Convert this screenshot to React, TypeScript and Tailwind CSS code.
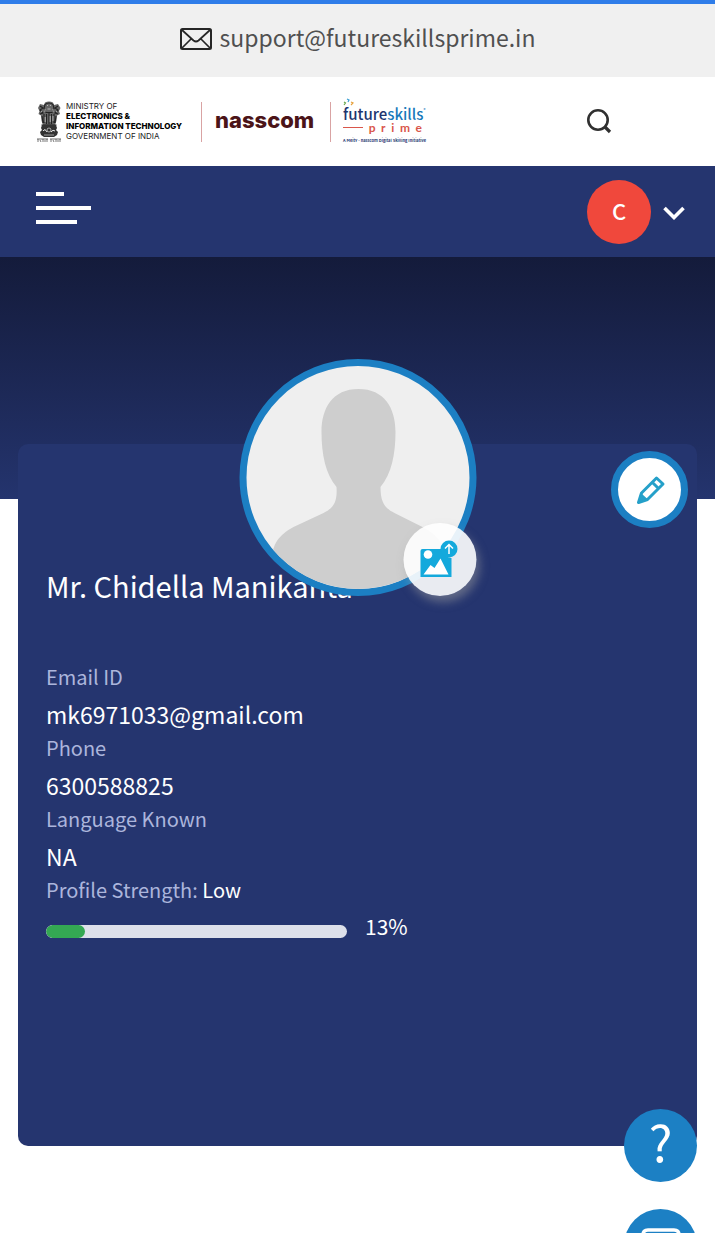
import React from "react";

function MailIcon() {
  return (
    <svg className="h-6 w-8" viewBox="0 0 32 24" fill="none" stroke="#262626" strokeWidth="2" strokeLinejoin="round" aria-hidden="true">
      <rect x="1" y="2" width="30" height="20" rx="1.5" />
      <path d="M2 3l11.5 10.5q2.5 2 5 0L30 3M2 21l9.5-9.5M30 21l-9.5-9.5" strokeWidth="1.7" />
    </svg>
  );
}

function Emblem() {
  return (
    <svg className="h-[42px] w-[26px]" viewBox="0 0 26 42" aria-hidden="true">
      <path d="M9 1.5Q13-.5 17 1.5L18 4l4-1 2.500 4-1.500 3 1 3-3 1.500-.5 5-1.500 5h-12l-1.500-5-.5-5L2.500 13l1-3L2 7l2-4 4 1z" fill="#666" />
      <g fill="none" stroke="#222" strokeWidth="1.1">
        <path d="M9 3.500q4-3 8 0l1 4-2 4h-6l-2-4zM4 5l3 2-3 2 3 3-3 1M22 5l-3 2 3 2-3 3 3 1M8 13v9M10.500 13v10M13 11v12M15.500 13v10M18 13v9M6 15l1 7M20 15l-1 7M5.500 24h15" />
      </g>
      <g fill="none" stroke="#ddd" strokeWidth=".7">
        <path d="M11 4.500h1M14 4.500h1M11.500 8h3M9 8v3M17 8v3M9.200 16v5M14.200 15v6M17 15v5M5 10l1 1M21 10l-1 1" />
      </g>
      <path d="M6 24h14l1 3-1 2 2 2-1 3-3 2H8l-3-2-1-3 2-2-1-2z" fill="#333" />
      <path d="M7 30q2-3 4 1M15 31q2-3 4-1" fill="none" stroke="#eee" strokeWidth="1" />
      <circle cx="13" cy="29" r="2" fill="none" stroke="#ddd" strokeWidth=".7" />
      <path d="M8 34h10" stroke="#bbb" strokeWidth=".8" />
      <path d="M1 38h11M14 38h11" stroke="#444" strokeWidth=".8" />
      <path d="M2 38v3M4 39l1 2M7 38v3M9 39v2M11 38v3M15 38v3M17 39l1 2M20 38v3M22 39v2M24 38v3" stroke="#555" strokeWidth=".8" />
    </svg>
  );
}

function Logos() {
  return (
    <div className="flex h-10 items-center">
      <Emblem />
      <p className="ml-1 w-[123px] whitespace-nowrap pb-px font-['Inter',sans-serif] text-[8px] leading-[10px] text-[#222]">
        MINISTRY OF
        <br />
        <strong className="font-extrabold text-black">
          ELECTRONICS &amp;
          <br />
          INFORMATION TECHNOLOGY
        </strong>
        <br />
        GOVERNMENT OF INDIA
      </p>
      <span className="ml-3 h-10 w-px bg-[#d9a3a3]" />
      <span className="ml-[13px] w-[101px] pb-1 font-['Inter',sans-serif] text-[22px] leading-7 font-extrabold text-[#4b1418]">nasscom</span>
      <span className="ml-[14px] h-10 w-px bg-[#d9a3a3]" />
      <div className="relative ml-3 flex w-[79px] flex-col">
        <svg className="absolute -top-1 left-0 h-2 w-3" viewBox="0 0 12 8" fill="none" strokeWidth="1.200" aria-hidden="true">
          <path d="M4 1l2 1-1 2" stroke="#3b9fd1" />
          <path d="M1 4l1.500 1L1 7" stroke="#6aa84f" />
          <path d="M8 4l2 1-2 2" stroke="#e7a13c" />
        </svg>
        <span className="flex whitespace-nowrap text-[15px] leading-6 font-medium text-[#1d3570]">
          future<span className="text-[#1779ba]">skills</span>
          <span className="text-[4px] leading-4 text-[#1779ba]">®</span>
        </span>
        <span className="-mt-1 flex h-3 items-center justify-between font-['Lato',sans-serif] text-[12px] leading-3 font-bold text-[#d9564b]">
          <span className="h-px w-5 bg-[#d9564b]" />
          <span>p</span>
          <span>r</span>
          <span>i</span>
          <span>m</span>
          <span>e</span>
        </span>
        <span className="mt-1 whitespace-nowrap text-[4px] leading-[4px] font-bold text-[#1d3570]">A MeitY - nasscom Digital Skilling Initiative</span>
      </div>
    </div>
  );
}

function UploadIcon() {
  return (
    <svg className="h-10 w-10" viewBox="0 0 40 40" aria-hidden="true">
      <path d="M3 10h20a9 9 0 0 0 9 9v19H1V12q0-2 2-2z" fill="#14a9dc" />
      <circle cx="8.500" cy="15.500" r="4.300" fill="#fff" />
      <path d="M4 35.500l7-9.500 4 3 6-9.500 8 16z" fill="#fff" />
      <circle cx="29.500" cy="10" r="8.500" fill="#14a9dc" />
      <path d="M29.500 15V5.500M25.500 9.500l4-4 4 4" fill="none" stroke="#fff" strokeWidth="1.500" />
    </svg>
  );
}

function Avatar() {
  return (
    <div className="absolute -top-[85px] left-1/2 size-[237px] -translate-x-1/2">
      <div className="size-full overflow-hidden rounded-full border-[7px] border-[#1c7fc3] bg-[#efefef]">
        <svg className="size-full" viewBox="0 0 223 223" role="img" aria-label="Profile picture">
          <path
            d="M112 23C86 23 75 42 75 66C75 88 79 108 90 121C91 136 87 142 77 147L47 161Q28 171 26 187V223H198V187Q196 171 176 161L148 147C138 142 134 136 134 121C145 108 149 88 149 66C149 42 138 23 112 23Z"
            fill="#cecece"
          />
        </svg>
      </div>
      <button
        type="button"
        aria-label="Upload picture"
        className="absolute right-0 bottom-0 flex size-[73px] items-center justify-center rounded-full bg-white/90 pb-px shadow-[3px_6px_10px_rgba(160,160,160,0.5)]"
      >
        <UploadIcon />
      </button>
    </div>
  );
}

function Field({ label, value }: { label: string; value: string }) {
  return (
    <div>
      <dt className="text-[20px] leading-[30px] text-[#acb5dc]">{label}</dt>
      <dd className="pt-1 text-[23px] leading-[37px] text-white">{value}</dd>
    </div>
  );
}

export default function App() {
  return (
    <div className="min-h-screen bg-white font-['Noto_Sans_CJK_SC','Noto_Sans',sans-serif]">
      <div className="flex h-[77px] items-center justify-center gap-2 border-t-4 border-[#2f7de9] bg-[#f0f0f0] pb-1">
        <MailIcon />
        <a href="mailto:support@futureskillsprime.in" className="pb-1 text-[23px] leading-8 text-[#505050]">
          support@futureskillsprime.in
        </a>
      </div>
      <header>
        <div className="flex h-[89px] items-center justify-between pr-[102px] pl-9">
          <Logos />
          <button type="button" aria-label="Search">
            <svg className="size-7" viewBox="0 0 28 28" fill="none" stroke="#303030" strokeWidth="2.600" aria-hidden="true">
              <circle cx="13" cy="12" r="9.700" />
              <path d="M19.500 18.500l5.500 5.500" strokeWidth="3.200" />
            </svg>
          </button>
        </div>
        <nav className="flex h-[91px] items-center justify-between bg-[#25356f] pr-[30px] pl-9">
          <button type="button" aria-label="Menu" className="flex flex-col gap-[10px] pb-2">
            <span className="h-1 w-7 bg-white" />
            <span className="h-1 w-[55px] bg-white" />
            <span className="h-1 w-[41px] bg-white" />
          </button>
          <button type="button" aria-label="Account" className="flex items-center gap-3">
            <span className="flex size-16 items-center justify-center rounded-full bg-[#f0483c] pb-1 text-[22px] leading-8 font-medium text-white">C</span>
            <svg className="h-4 w-[22px]" viewBox="0 0 22 16" fill="none" stroke="#fff" strokeWidth="3.600" aria-hidden="true">
              <path d="M1.500 4L11 13.500 20.500 4" />
            </svg>
          </button>
        </nav>
      </header>
      <main>
        <div className="h-[242px] bg-linear-to-b from-[#141b3b] to-[#24346e]" />
        <section className="relative mx-[18px] -mt-[55px] min-h-[702px] rounded-[10px] bg-[#25356f] px-7 pt-[121px]">
          <h1 className="text-[29px] leading-10 text-white">Mr. Chidella Manikanta</h1>
          <dl className="mt-[57px]">
            <Field label="Email ID" value="mk6971033@gmail.com" />
            <Field label="Phone" value="6300588825" />
            <Field label="Language Known" value="NA" />
          </dl>
          <p id="strength" className="text-[20px] leading-[30px] text-[#acb5dc]">
            Profile Strength: <span className="text-white">Low</span>
          </p>
          <div className="mt-[6px] flex items-center gap-[18px]">
            <div role="progressbar" aria-labelledby="strength" aria-valuenow={13} className="mt-[10px] h-[13px] w-[301px] overflow-hidden rounded-full bg-[#dde0ea]">
              <div className="h-full rounded-full bg-[#34a853]" style={{ width: "13%" }} />
            </div>
            <span className="text-[21px] leading-[30px] text-white">13%</span>
          </div>
          <Avatar />
          <button type="button" aria-label="Edit profile" className="absolute top-[7px] right-[9px] flex size-[77px] items-center justify-center rounded-full border-[7px] border-[#1c7fc3] bg-white">
            <svg className="size-8" viewBox="0 0 32 32" fill="none" stroke="#25a0c9" strokeWidth="3" strokeLinejoin="round" aria-hidden="true">
              <path d="M4.500 28.500L7.500 19 22.500 4l6.500 6L13.500 25.500zM18.500 8.500l6 6" />
              <path d="M4.500 28.500L7.500 20.500l5.500 5z" fill="#25a0c9" strokeWidth="1.500" />
            </svg>
          </button>
        </section>
      </main>
      <div className="fixed right-[18px] -bottom-[49px] flex flex-col gap-[27px]">
        <button type="button" aria-label="Help" className="flex size-[73px] items-center justify-center rounded-full bg-[#1c80c4] pb-3 text-[50px] leading-none text-white">
          ?
        </button>
        <button type="button" aria-label="Chat" className="flex size-[73px] items-center justify-center rounded-full bg-[#1c80c4]">
          <svg className="h-9 w-10" viewBox="0 0 40 36" fill="none" stroke="#fff" strokeWidth="3.500" aria-hidden="true">
            <path d="M7 2h26q5 0 5 5v16q0 5-5 5H20l-9 6v-6H7q-5 0-5-5V7q0-5 5-5z" />
          </svg>
        </button>
      </div>
    </div>
  );
}
